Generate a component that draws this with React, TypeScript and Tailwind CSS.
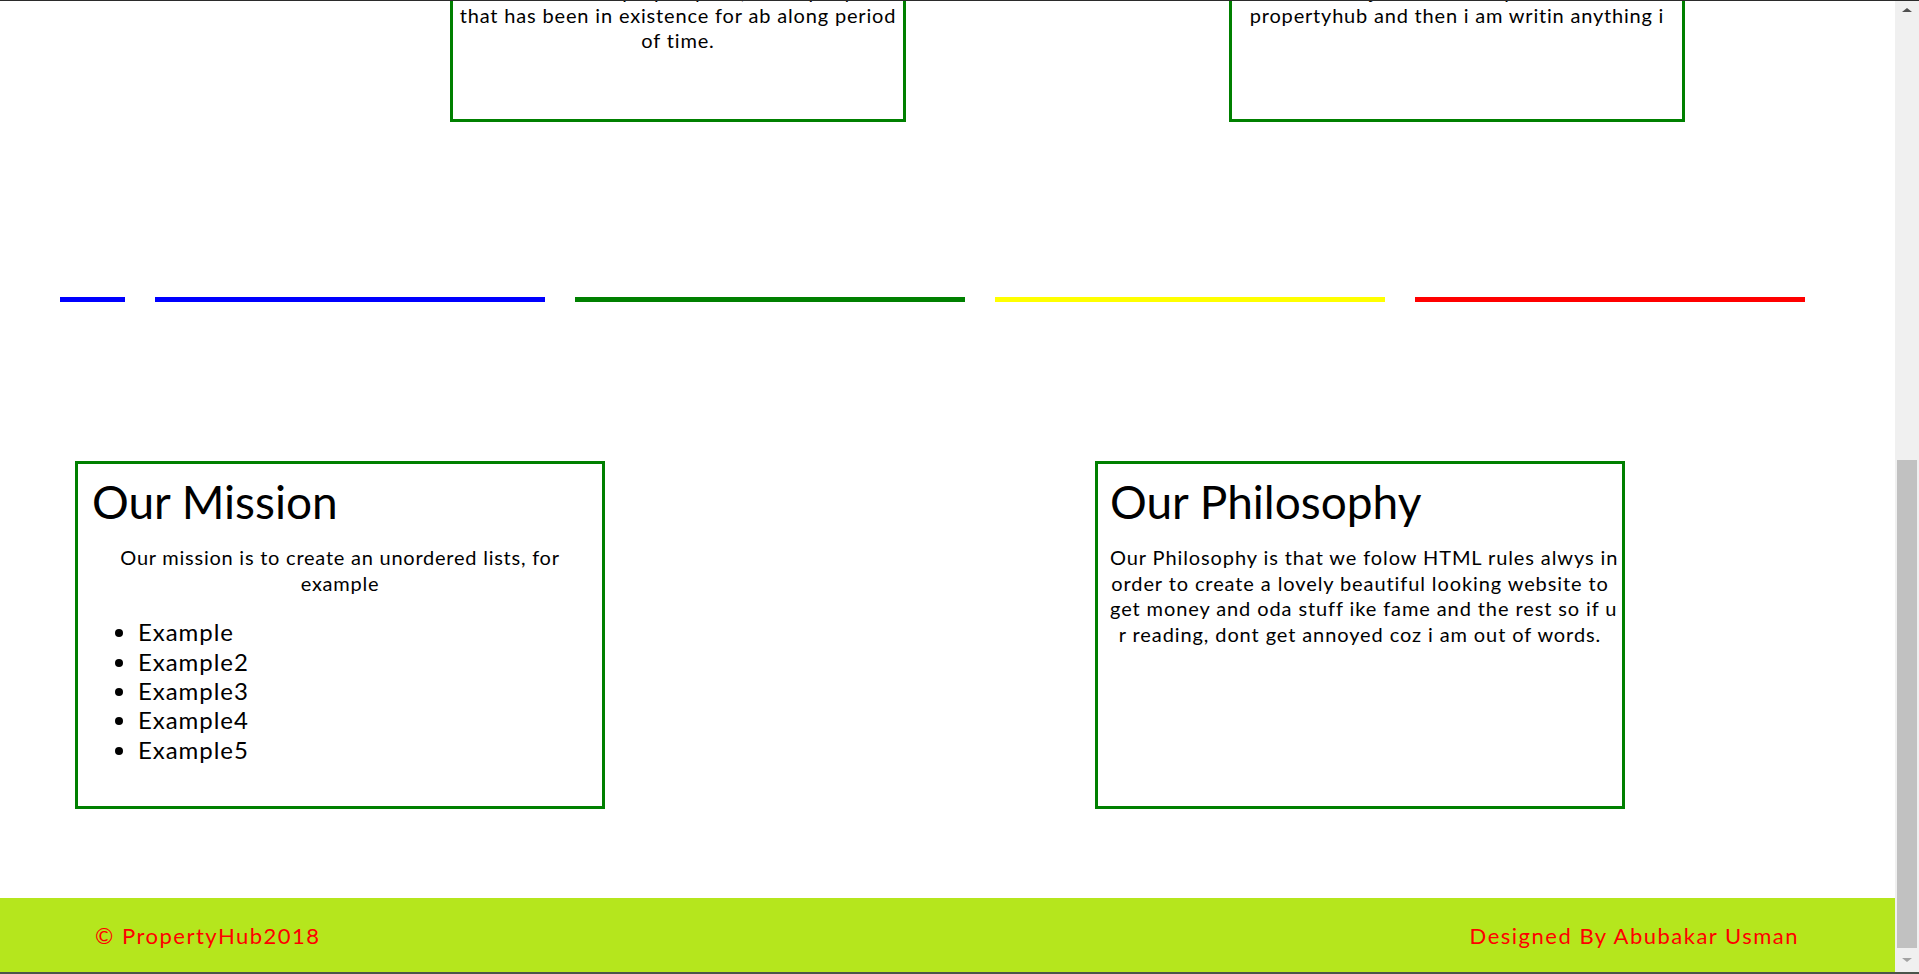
import React from 'react';

const font = "font-['Lato','Liberation_Sans',sans-serif]";

const lines = [
  { key: 'blue-long', color: 'bg-[#0000ff]' },
  { key: 'green', color: 'bg-[#008000]' },
  { key: 'yellow', color: 'bg-[#ffff00]' },
  { key: 'red', color: 'bg-[#ff0000]' }
];

const examples = ['Example', 'Example2', 'Example3', 'Example4', 'Example5'];

const Scrollbar: React.FC = () => (
  <div className="w-[24px] bg-[#f0f0f0] flex flex-col">
    {/* up arrow */}
    <div className="h-[17px] flex items-center justify-center">
      <div className="w-0 h-0 border-l-[5px] border-r-[5px] border-b-[4px] border-l-transparent border-r-transparent border-b-[#505050]" />
    </div>
    <div className="mt-[442px] h-[488px] mx-[2px] bg-[#c1c1c1]" />
    {/* down arrow */}
    <div className="flex-1 flex items-center justify-center">
      <div className="w-0 h-0 border-l-[5px] border-r-[5px] border-t-[4px] border-l-transparent border-r-transparent border-t-[#a3a3a3]" />
    </div>
  </div>
);

const App: React.FC = () => {
  return (
    <div className={`h-[974px] w-full flex flex-col overflow-hidden bg-white text-black ${font}`}>
      <div className="h-px bg-[#2b2b2b]" />
      <div className="flex-1 flex min-h-0">
        <main className="flex-1 flex flex-col min-w-0">
          {/* About boxes (scrolled, top cut off) */}
          <section className="h-[121px] overflow-hidden flex flex-col justify-end">
            <div className="flex items-stretch">
              <div className="ml-[450px] w-[456px] border-[3px] border-[#008000] pb-[67px] text-center text-[20px] leading-[24.5px] tracking-[0.042em]">
                <p className="whitespace-nowrap">
                  Welcome to propertyhub, a company
                  <br />
                  that has been in existence for ab along period
                  <br />
                  of time.
                </p>
              </div>
              <div className="ml-[323px] w-[456px] border-[3px] border-[#008000] pb-[67px] text-center text-[20px] leading-[24.5px] tracking-[0.04em]">
                <p className="whitespace-nowrap">
                  This is just some sample text for
                  <br />
                  propertyhub and then i am writin anything i
                </p>
              </div>
            </div>
          </section>

          {/* Coloured dividers */}
          <div className="mt-[175px] h-[5px] flex gap-[30px] pl-[60px]">
            <div className="w-[65px] bg-[#0000ff]" />
            {lines.map(({ key, color }) => (
              <div key={key} className={`w-[390px] ${color}`} />
            ))}
          </div>

          {/* Mission / Philosophy */}
          <div className="mt-[159px] h-[348px] flex">
            <div className="ml-[75px] w-[530px] border-[3px] border-[#008000] px-[14px] pt-[10px]">
              <h2 className="text-[46px] leading-[1.2]">Our Mission</h2>
              <p className="mt-[16px] text-center text-[20px] leading-[25.5px] tracking-[0.038em] whitespace-nowrap">
                Our mission is to create an unordered lists, for
                <br />
                example
              </p>
              <ul className="mt-[21px] pl-[46px] list-disc text-[24px] leading-[29.4px] tracking-[0.04em]">
                {examples.map((item) => (
                  <li key={item}>{item}</li>
                ))}
              </ul>
            </div>

            <div className="ml-[490px] w-[530px] border-[3px] border-[#008000] px-[12px] pt-[10px]">
              <h2 className="text-[46px] leading-[1.2]">Our Philosophy</h2>
              <p className="mt-[16px] text-center text-[20px] leading-[25.5px] tracking-[0.045em] whitespace-nowrap">
                Our Philosophy is that we folow HTML rules alwys in
                <br />
                order to create a lovely beautiful looking website to
                <br />
                get money and oda stuff ike fame and the rest so if u
                <br />
                r reading, dont get annoyed coz i am out of words.
              </p>
            </div>
          </div>

          {/* Footer */}
          <footer className="mt-[89px] flex-1 bg-[#b5e61d] flex items-center justify-between pl-[95px] pr-[96px] text-[22px] tracking-[1.5px] text-[#ff0000]">
            <span>© PropertyHub2018</span>
            <span>Designed By Abubakar Usman</span>
          </footer>
        </main>
        <Scrollbar />
      </div>
      <div className="h-[2px] bg-[#4b554b]" />
    </div>
  );
};

export default App;
